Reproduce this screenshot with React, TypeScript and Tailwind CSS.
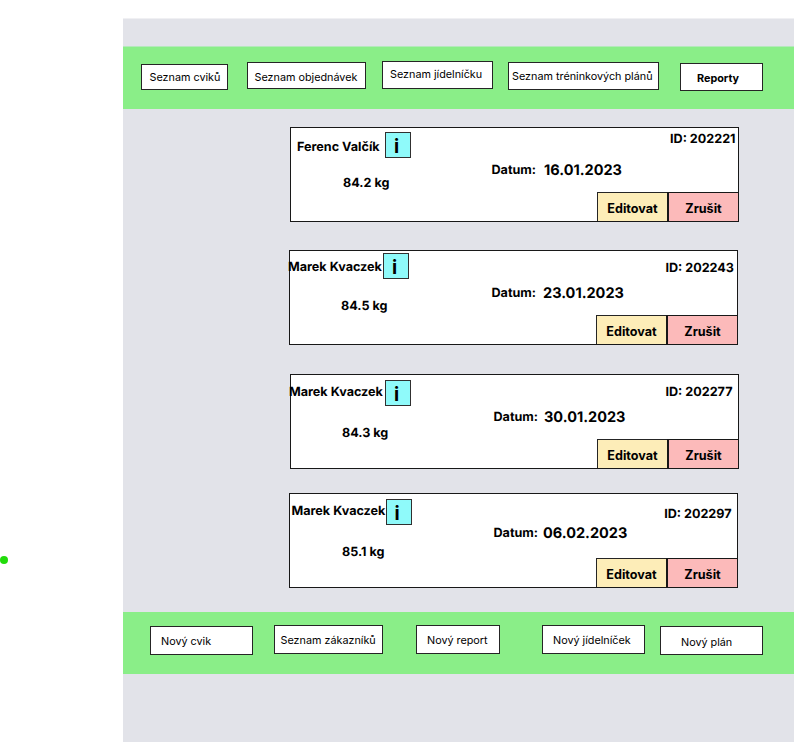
type NavItem = { label: string; box: string; text?: string };

type Report = {
  id: string;
  name: string;
  weight: string;
  date: string;
  card: string;
  nameCls: string;
  infoCls: string;
  weightCls: string;
  labelCls: string;
  dateCls: string;
  idCls: string;
};

const topNav: NavItem[] = [
  { label: "Seznam cviků", box: "ml-[18px] mt-[17px] h-[26px] w-[87px] pl-[7.5px] pt-[5px]" },
  { label: "Seznam objednávek", box: "ml-[19px] mt-[15px] h-[27px] w-[119px] pl-[6.5px] pt-[7px]" },
  { label: "Seznam jídelníčku", box: "ml-[16px] mt-[14px] h-[28px] w-[111px] pl-[7px] pt-[5px]" },
  { label: "Seznam tréninkových plánů", box: "ml-[15px] mt-[15px] h-[28px] w-[151px] pl-[3px] pt-[6px]" },
  { label: "Reporty", box: "ml-[21px] mt-[16px] h-[28px] w-[83px] pl-[16px] pt-[7px]", text: "font-bold" },
];

const bottomNav: NavItem[] = [
  { label: "Nový cvik", box: "ml-[27px] mt-[14px] h-[29px] w-[103px] pl-[10px] pt-[7px]" },
  { label: "Seznam zákazníků", box: "ml-[21px] mt-[13px] h-[29px] w-[109px] pl-[5.5px] pt-[7px]" },
  { label: "Nový report", box: "ml-[33px] mt-[13px] h-[29px] w-[84px] pl-[10px] pt-[7px]" },
  { label: "Nový jídelníček", box: "ml-[42px] mt-[13px] h-[29px] w-[103px] pl-[10px] pt-[7px]" },
  { label: "Nový plán", box: "ml-[15px] mt-[14px] h-[29px] w-[103px] pl-[20px] pt-[8px]" },
];

const reports: Report[] = [
  {
    id: "202221", name: "Ferenc Valčík", weight: "84.2 kg", date: "16.01.2023",
    card: "ml-[167px] mt-[18px]",
    nameCls: "ml-[6px] mt-[12px] w-[88px]", infoCls: "mt-[4px]", weightCls: "ml-[52px] mt-[17px]",
    labelCls: "ml-[47.5px] mt-[35px] w-[52.5px]", dateCls: "mt-[35px]", idCls: "mt-[4px] mr-[2.5px]",
  },
  {
    id: "202243", name: "Marek Kvaczek", weight: "84.5 kg", date: "23.01.2023",
    card: "ml-[166px] mt-[28px]",
    nameCls: "-ml-[2px] mt-[9px] w-[95px]", infoCls: "mt-[2px]", weightCls: "ml-[51px] mt-[17px]",
    labelCls: "ml-[48.5px] mt-[35px] w-[51.5px]", dateCls: "mt-[35px]", idCls: "mt-[10px] mr-[3px]",
  },
  {
    id: "202277", name: "Marek Kvaczek", weight: "84.3 kg", date: "30.01.2023",
    card: "ml-[167px] mt-[29px]",
    nameCls: "-ml-[2px] mt-[10px] w-[96px]", infoCls: "mt-[5px]", weightCls: "ml-[51px] mt-[20px]",
    labelCls: "ml-[49.5px] mt-[35px] w-[50.5px]", dateCls: "mt-[35px]", idCls: "mt-[10px] mr-[5.5px]",
  },
  {
    id: "202297", name: "Marek Kvaczek", weight: "85.1 kg", date: "06.02.2023",
    card: "ml-[166px] mt-[24px]",
    nameCls: "ml-[1.5px] mt-[10px] w-[94px]", infoCls: "mt-[5px]", weightCls: "ml-[52px] mt-[20px]",
    labelCls: "ml-[50.5px] mt-[32px] w-[49.5px]", dateCls: "mt-[32px]", idCls: "mt-[13px] mr-[5.5px]",
  },
];

function Nav({ items }: { items: NavItem[] }) {
  return (
    <>
      {items.map((item) => (
        <button
          key={item.label}
          className={`flex shrink-0 items-start border border-[#252525] bg-white text-[10.8px] leading-[16px] whitespace-nowrap ${item.box}`}
        >
          <span className={item.text}>{item.label}</span>
        </button>
      ))}
    </>
  );
}

function Card({ r }: { r: Report }) {
  return (
    <article
      className={`flex h-[95px] w-[449px] shrink-0 border border-[#181818] bg-white text-[12.6px] leading-[16px] font-bold whitespace-nowrap text-black ${r.card}`}
    >
      <div className="w-[153px] shrink-0">
        <div className="flex h-[31px] items-start">
          <h2 className={`shrink-0 ${r.nameCls}`}>{r.name}</h2>
          <button
            className={`flex h-[26px] w-[26px] shrink-0 items-center justify-center border border-[#303030] bg-[#8ffafa] pt-[4px] pr-[3px] text-[19px] ${r.infoCls}`}
          >
            i
          </button>
        </div>
        <p className={r.weightCls}>{r.weight}</p>
      </div>
      <div className="flex w-[153px] shrink-0 items-start">
        <span className={`shrink-0 ${r.labelCls}`}>Datum:</span>
        <time className={`text-[14.5px] ${r.dateCls}`}>{r.date}</time>
      </div>
      <div className="flex flex-1 flex-col items-end justify-between">
        <span className={r.idCls}>ID: {r.id}</span>
        <div className="flex">
          <button className="h-[29px] w-[70px] border-t border-l border-[#252525] bg-[#fdedb8] pt-[3px]">Editovat</button>
          <button className="h-[29px] w-[71px] border-t border-l-2 border-[#181818] bg-[#fcbaba] pt-[3px]">Zrušit</button>
        </div>
      </div>
    </article>
  );
}

export default function App() {
  return (
    <div className="flex h-[756px] w-[808px] overflow-hidden bg-white pt-[18px] font-['Inter',sans-serif] text-black [text-rendering:geometricPrecision]">
      <aside className="w-[123px] shrink-0 pt-[538px]">
        <div className="size-[8px] rounded-full bg-[#22dc0a]" />
      </aside>
      <main className="h-[724px] w-[671px] shrink-0 border-t border-[#f0f0f3] bg-[#e2e3e9]">
        <header className="mt-[27px] flex h-[63px] items-start border-t border-[#b5e8bc] bg-[#8aee88]">
          <Nav items={topNav} />
        </header>
        <section className="flex h-[503px] flex-col items-start">
          {reports.map((r) => (
            <Card key={r.id} r={r} />
          ))}
        </section>
        <footer className="flex h-[62px] items-start bg-[#8aee88]">
          <Nav items={bottomNav} />
        </footer>
      </main>
    </div>
  );
}
